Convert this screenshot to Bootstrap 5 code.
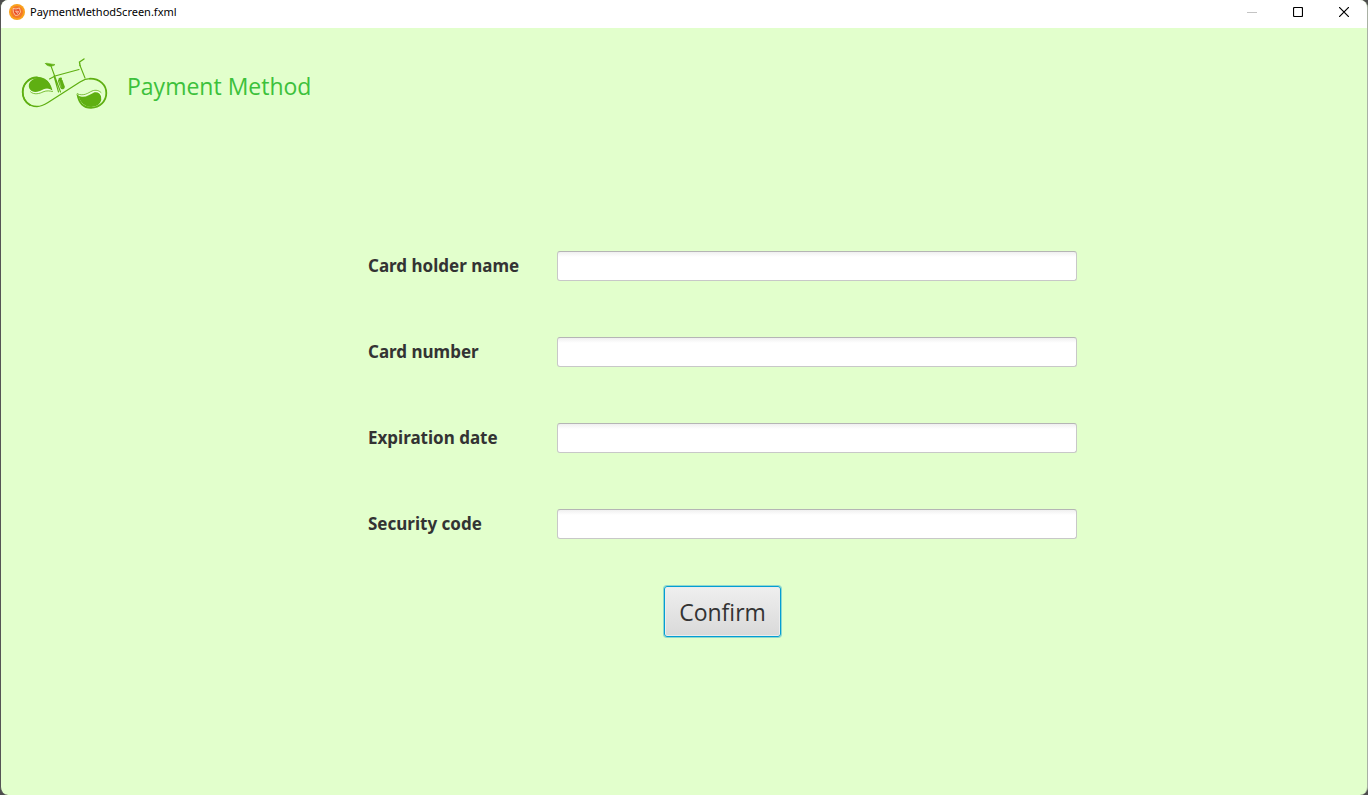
<!DOCTYPE html>
<html lang="en">
<head>
<meta charset="utf-8">
<meta name="viewport" content="width=device-width, initial-scale=1">
<title>PaymentMethodScreen.fxml</title>
<link href="https://cdn.jsdelivr.net/npm/bootstrap@5.3.0/dist/css/bootstrap.min.css" rel="stylesheet">
<style>
  body { background: #4d4d4d; font-family: "Open Sans", "Noto Sans", sans-serif; color: #333; }
  .app-window { background: #e2ffcc; border: solid #555; border-width: 0 1px; border-right-color: #a9b0a4; border-radius: 8px; overflow: hidden; }
  .title-bar { height: 28px; background: #fff; color: #000; font: 11px/24px "Noto Sans", sans-serif; padding-left: 8px; }
  .title-bar .app-name { gap: 5px; height: 24px; }
  .win-btn { width: 46px; height: 24px; border: 0; background: none; padding: 0; color: #000; display: flex; align-items: center; justify-content: center; }
  .win-btn:disabled { color: #c4c4c4; }
  .screen-head { padding: 22px 9px; gap: 7px; }
  .screen-head h1 { font-size: 23px; line-height: 32px; font-weight: 400; color: #3cc13b; margin: 6px 0 0; }
  .pay-form { width: 100%; max-width: 786px; padding-left: 77px; margin-top: 113px; }
  .fields { display: grid; gap: 56px; }
  .field-row { display: grid; grid-template-columns: 189px 1fr; align-items: center; height: 30px; }
  .field-row label { font-size: 17px; line-height: 24px; font-weight: 700; font-family: "Noto Sans", sans-serif; }
  .field-row .form-control { height: 30px; padding: 4px 8px; border: 1px solid #c8c8c8; border-top-color: #b5b5b5; border-radius: 3px; background: linear-gradient(#f0f0f0, #fff 5px); }
  .confirm-btn { margin-top: 47px; width: 117px; height: 51px; padding: 0; border: 1px solid #039ed3; border-radius: 3px; font-size: 23px; line-height: 32px; color: #333; background: linear-gradient(#efefef, #d9d9d9); box-shadow: 0 0 0 1px #8fd8cf, inset 0 0 0 1px #ececec; }
  .confirm-btn:hover { color: #333; background: linear-gradient(#f5f5f5, #e2e2e2); border-color: #039ed3; }
</style>
</head>
<body>
<div class="app-window min-vh-100 d-flex flex-column">
  <header class="title-bar d-flex justify-content-between">
    <div class="app-name d-flex align-items-center">
      <svg width="16" height="16" viewBox="0 0 16 16" aria-hidden="true">
        <circle cx="8" cy="8" r="8" fill="#f9a01b"/>
        <circle cx="8" cy="8" r="6" fill="#f4772a"/>
        <path d="M4 4.500l3 .5 3.500-1 1 4-2 3-3 .5-2-3z" fill="#e8502a" stroke="#ffd9b8" stroke-width=".8"/>
        <path d="M6.500 7l3 .5-1 2z" fill="none" stroke="#ffe3c8" stroke-width=".7"/>
      </svg>
      <span>PaymentMethodScreen.fxml</span>
    </div>
    <div class="d-flex">
      <button type="button" class="win-btn" disabled aria-label="Minimize"><svg width="10" height="10"><path d="M0 5.5h10" stroke="currentColor"/></svg></button>
      <button type="button" class="win-btn" aria-label="Maximize"><svg width="10" height="10"><rect x=".5" y=".5" width="9" height="9" rx="1" fill="none" stroke="currentColor" stroke-width="1.2"/></svg></button>
      <button type="button" class="win-btn" aria-label="Close"><svg width="10" height="10"><path d="M0 0l10 10M10 0L0 10" stroke="currentColor" stroke-width="1.2"/></svg></button>
    </div>
  </header>

  <div class="screen-head d-flex align-items-center">
    <svg width="110" height="66" viewBox="0 0 110 66" fill="none" stroke="#5faf12" stroke-linecap="round" aria-label="Bicycle logo" role="img">
      <!-- wheels joined by the chain stay -->
      <path d="M39 34C36 29 32 27.500 27 27.500C18 27.500 12.700 35 12.700 42C12.700 50 18 56.500 27 56.500C31 56.500 34 55 38 52.500L70 32C74 29.500 76 28.700 80 28.700" stroke-width="1.300"/>
      <path d="M27 27.500C18 27.500 12.700 35 12.700 42C12.700 47 15 52 20 55" stroke-width="1.800"/>
      <path d="M80 28.700C90 28.700 96.300 35 96.300 43C96.300 51 90 57.800 81 57.800C74 57.800 69 53 67.500 44.500" stroke-width="1.800"/>
      <!-- leaves -->
      <path d="M42.500 41C41 32 34 27 27 28C19 29.500 17 36 20.500 40C24 43.500 29 41.500 33 39.500C37 37.500 40 38.500 42.500 41Z" fill="#5faf12" stroke="none"/>
      <path d="M20.500 41C24 44.500 29 42.500 33 40.500C37 39 40 39.500 42.500 41" stroke="#f8fff0" stroke-width=".8"/>
      <path d="M20.500 41.800C24 45.300 30 43.500 33 41.900C37 40.200 40 41 42.500 41.500" stroke-width=".8"/>
      <path d="M68.500 45.500C74 49 79 45 84 42.500C91 41 94.500 50 88 55C80 59.500 71 56 68.500 45.500Z" fill="#5faf12" stroke="none"/>
      <path d="M67.500 44.500C74 47.500 78 44 82 42C88 39.500 92 43 92 49" stroke="#f8fff0" stroke-width=".8"/>
      <path d="M67.500 44C74 46.500 78 43 82 41C86 39.500 89 40.500 91 42.500" stroke-width=".8"/>
      <!-- frame, bottle, saddle, handlebar -->
      <path d="M41 16L50.500 42M39.500 29L45 26L69 19.500M75 28L70 15.500M44 26L48.500 42" stroke-width="1.100"/>
      <path d="M70 15.500L69.500 12L74 9" stroke-width="1.400"/>
      <path d="M35.500 13.500C37 12.500 39 14 45 14.500C44 16 42 16 40 16.200C38 16 35.500 14.500 35.500 13.500Z" fill="#5faf12" stroke-width=".6"/>
      <path d="M50.300 31L52.500 37" stroke-width="4.600"/>
      <path d="M49.500 29L51 28.500" stroke-width="2"/>
      <path d="M49.500 31.500L51 37" stroke="#a6d970" stroke-width=".6"/>
    </svg>
    <h1>Payment Method</h1>
  </div>

  <main class="d-flex justify-content-center">
    <form class="pay-form">
      <div class="fields">
        <div class="field-row"><label for="holder">Card holder name</label><input id="holder" type="text" class="form-control"></div>
        <div class="field-row"><label for="number">Card number</label><input id="number" type="text" class="form-control"></div>
        <div class="field-row"><label for="expiry">Expiration date</label><input id="expiry" type="text" class="form-control"></div>
        <div class="field-row"><label for="code">Security code</label><input id="code" type="text" class="form-control"></div>
      </div>
      <div class="text-center"><button type="button" class="btn confirm-btn">Confirm</button></div>
    </form>
  </main>
</div>
<script src="https://cdn.jsdelivr.net/npm/bootstrap@5.3.0/dist/js/bootstrap.bundle.min.js"></script>
</body>
</html>
